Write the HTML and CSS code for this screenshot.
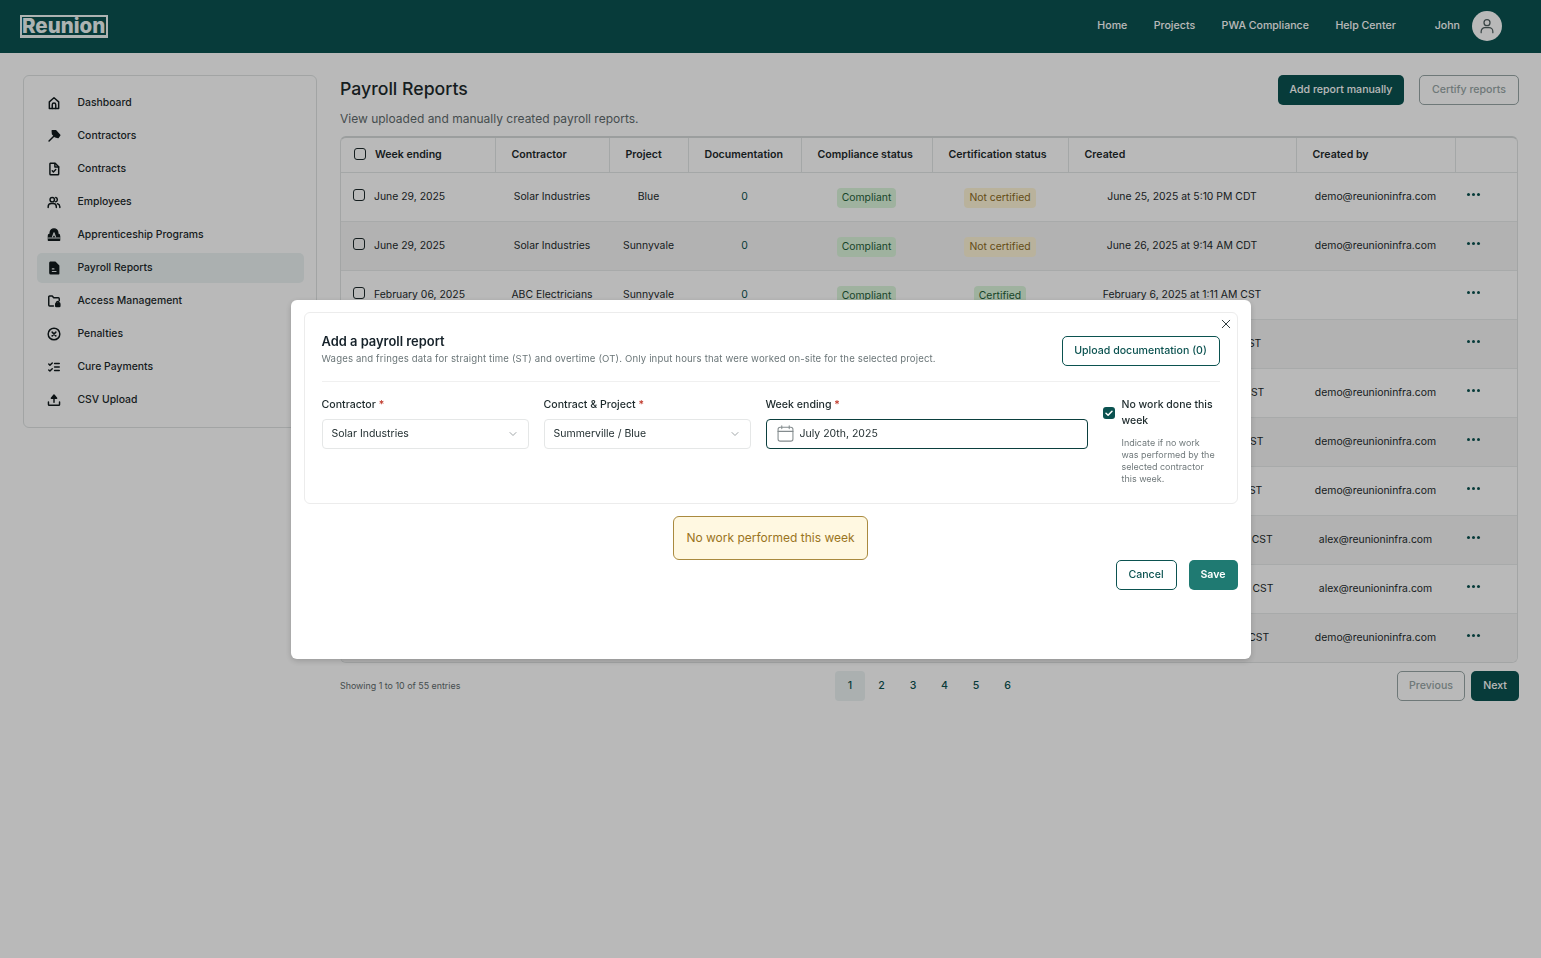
FILE: index.html
```html
<!DOCTYPE html>
<html lang="en">
<head>
<meta charset="utf-8">
<title>Payroll Reports</title>
<link rel="stylesheet" href="styles.css">
</head>
<body>
<header class="topbar">
  <div class="logo">Reunion</div>
  <nav class="topnav">
    <a>Home</a><a>Projects</a><a>PWA Compliance</a><a>Help Center</a>
  </nav>
  <div class="user">
    <span class="user-name">John</span>
    <span class="avatar"><svg viewBox="0 0 24 24" width="20" height="20" fill="none" stroke="#4f5f60" stroke-width="1.5" stroke-linecap="round"><circle cx="12" cy="8" r="3.6"/><path d="M5 20v-1.5A4.5 4.5 0 0 1 9.500 14h5a4.500 4.500 0 0 1 4.500 4.500V20"/></svg></span>
  </div>
</header>

<div class="page">
  <aside class="sidebar">
    <a class="side-item"><svg class="side-icon" viewBox="0 0 24 24"><path d="M4 21.500V10l8-7 8 7v11.500z"/><path d="M9 21.500V15a3 3 0 0 1 6 0v6.500"/></svg>Dashboard</a>
    <a class="side-item"><svg class="side-icon" viewBox="0 0 24 24"><path d="M3.500 20.500l9-9"/><path d="M9 3h6l7 7.500-3 4-4.500-1-5-5z" class="solid"/></svg>Contractors</a>
    <a class="side-item"><svg class="side-icon" viewBox="0 0 24 24"><path d="M6 2h8l6 6v12.500a1.500 1.500 0 0 1-1.500 1.500h-12A1.500 1.500 0 0 1 5 20.500V3.500A1.500 1.500 0 0 1 6 2z"/><path d="M13.500 2.500V8.500H20"/><path d="M9 15l2 2 4-4"/></svg>Contracts</a>
    <a class="side-item"><svg class="side-icon" viewBox="0 0 24 24"><circle cx="9" cy="8" r="3.800"/><path d="M2 21.500V20a5.500 5.500 0 0 1 5.500-5.500h3A5.500 5.500 0 0 1 16 20v1.500"/><path d="M15 4.300a3.800 3.800 0 0 1 0 7.300"/><path d="M18 15a5.500 5.500 0 0 1 4 5v1.500"/></svg>Employees</a>
    <a class="side-item"><svg class="side-icon" viewBox="0 0 24 24"><path class="solid" d="M2.500 21v-7.500a3 3 0 0 1 3-3V8a6.500 6.500 0 0 1 13 0v2.500a3 3 0 0 1 3 3V21z"/><path class="cut" d="M9.500 15l2.500-7 2.500 7M10.500 12.500h3M2.500 17h19"/></svg>Apprenticeship Programs</a>
    <a class="side-item side-active"><svg class="side-icon" viewBox="0 0 24 24"><path class="solid" d="M6 2h8l6 6v14H6.500A1.500 1.500 0 0 1 5 20.500V3.500A1.500 1.500 0 0 1 6 2z"/><path class="cut" d="M9 18h6.500M9 13.500h3"/></svg>Payroll Reports</a>
    <a class="side-item"><svg class="side-icon" viewBox="0 0 24 24"><path d="M11 20.500H4.500A1.500 1.500 0 0 1 3 19V5a1.500 1.500 0 0 1 1.500-1.500H9l2.500 3H19.500A1.500 1.500 0 0 1 21 8v3"/><rect class="solid" x="15" y="16" width="7" height="5.500" rx="1"/><path d="M16.500 16v-1a2 2 0 0 1 4 0v1"/></svg>Access Management</a>
    <a class="side-item"><svg class="side-icon" viewBox="0 0 24 24"><circle cx="12" cy="12" r="10"/><path d="M8.800 8.800l6.400 6.400M15.200 8.800l-6.400 6.400"/></svg>Penalties</a>
    <a class="side-item"><svg class="side-icon" viewBox="0 0 24 24"><path d="M3 7l2 2 4-4M3 17l2 2 4-4M13 6h8M13 12h8M13 18h8"/></svg>Cure Payments</a>
    <a class="side-item"><svg class="side-icon" viewBox="0 0 24 24"><path d="M12 16V5"/><path class="solid" d="M7.500 9L12 3.500 16.500 9z"/><path d="M2.500 15.500v4a1.500 1.500 0 0 0 1.500 1.500h16a1.500 1.500 0 0 0 1.500-1.500v-4"/></svg>CSV Upload</a>
  </aside>

  <main class="main">
    <div class="title-row">
      <div class="title-text">
        <h1 class="page-title">Payroll Reports</h1>
        <p class="page-sub">View uploaded and manually created payroll reports.</p>
      </div>
      <div class="title-actions">
        <button class="btn btn-dark btn-add">Add report manually</button>
        <button class="btn btn-muted btn-certify">Certify reports</button>
      </div>
    </div>

    <div class="table-wrap">
      <table class="reports">
        <colgroup>
          <col class="c1"><col class="c2"><col class="c3"><col class="c4"><col class="c5"><col class="c6"><col class="c7"><col class="c8"><col class="c9">
        </colgroup>
        <thead>
          <tr>
            <th class="th-week"><span class="check check-head"></span>Week ending</th>
            <th>Contractor</th><th>Project</th><th>Documentation</th><th>Compliance status</th><th>Certification status</th><th>Created</th><th>Created by</th><th></th>
          </tr>
        </thead>
        <tbody>
          <tr><td class="td-week"><span class="check"></span>June 29, 2025</td><td>Solar Industries</td><td>Blue</td><td class="zero">0</td><td><span class="badge good">Compliant</span></td><td><span class="badge warn">Not certified</span></td><td>June 25, 2025 at 5:10 PM CDT</td><td>demo@reunioninfra.com</td><td><span class="dots"><i></i><i></i><i></i></span></td></tr>
          <tr><td class="td-week"><span class="check"></span>June 29, 2025</td><td>Solar Industries</td><td>Sunnyvale</td><td class="zero">0</td><td><span class="badge good">Compliant</span></td><td><span class="badge warn">Not certified</span></td><td>June 26, 2025 at 9:14 AM CDT</td><td>demo@reunioninfra.com</td><td><span class="dots"><i></i><i></i><i></i></span></td></tr>
          <tr><td class="td-week"><span class="check"></span>February 06, 2025</td><td>ABC Electricians</td><td>Sunnyvale</td><td class="zero">0</td><td><span class="badge good">Compliant</span></td><td><span class="badge good">Certified</span></td><td>February 6, 2025 at 1:11 AM CST</td><td></td><td><span class="dots"><i></i><i></i><i></i></span></td></tr>
          <tr><td class="td-week"><span class="check"></span>February 06, 2025</td><td>ABC Electricians</td><td>Sunnyvale</td><td class="zero">0</td><td><span class="badge good">Compliant</span></td><td><span class="badge good">Certified</span></td><td>February 6, 2025 at 1:11 AM CST</td><td></td><td><span class="dots"><i></i><i></i><i></i></span></td></tr>
          <tr><td class="td-week"><span class="check"></span>January 26, 2025</td><td>Solar Industries</td><td>Blue</td><td class="zero">0</td><td><span class="badge good">Compliant</span></td><td><span class="badge warn">Not certified</span></td><td>January 28, 2025 at 1:22 PM CST</td><td>demo@reunioninfra.com</td><td><span class="dots"><i></i><i></i><i></i></span></td></tr>
          <tr><td class="td-week"><span class="check"></span>January 19, 2025</td><td>Solar Industries</td><td>Blue</td><td class="zero">0</td><td><span class="badge good">Compliant</span></td><td><span class="badge warn">Not certified</span></td><td>January 21, 2025 at 1:05 PM CST</td><td>demo@reunioninfra.com</td><td><span class="dots"><i></i><i></i><i></i></span></td></tr>
          <tr><td class="td-week"><span class="check"></span>January 12, 2025</td><td>Solar Industries</td><td>Blue</td><td class="zero">0</td><td><span class="badge good">Compliant</span></td><td><span class="badge warn">Not certified</span></td><td>January 14, 2025 at 1:18 PM CST</td><td>demo@reunioninfra.com</td><td><span class="dots"><i></i><i></i><i></i></span></td></tr>
          <tr><td class="td-week"><span class="check"></span>December 29, 2024</td><td>Solar Industries</td><td>Blue</td><td class="zero">0</td><td><span class="badge good">Compliant</span></td><td><span class="badge warn">Not certified</span></td><td>December 30, 2024 at 11:46 AM CST</td><td>alex@reunioninfra.com</td><td><span class="dots"><i></i><i></i><i></i></span></td></tr>
          <tr><td class="td-week"><span class="check"></span>December 22, 2024</td><td>Solar Industries</td><td>Blue</td><td class="zero">0</td><td><span class="badge good">Compliant</span></td><td><span class="badge warn">Not certified</span></td><td>December 23, 2024 at 10:52 AM CST</td><td>alex@reunioninfra.com</td><td><span class="dots"><i></i><i></i><i></i></span></td></tr>
          <tr><td class="td-week"><span class="check"></span>December 15, 2024</td><td>Solar Industries</td><td>Blue</td><td class="zero">0</td><td><span class="badge good">Compliant</span></td><td><span class="badge warn">Not certified</span></td><td>December 16, 2024 at 9:31 AM CST</td><td>demo@reunioninfra.com</td><td><span class="dots"><i></i><i></i><i></i></span></td></tr>
        </tbody>
      </table>
    </div>

    <div class="table-foot">
      <span class="entries">Showing 1 to 10 of 55 entries</span>
      <div class="pages">
        <span class="pg pg-on">1</span><span class="pg">2</span><span class="pg">3</span><span class="pg">4</span><span class="pg">5</span><span class="pg">6</span>
      </div>
      <div class="pager">
        <button class="btn btn-muted btn-prev">Previous</button>
        <button class="btn btn-dark btn-next">Next</button>
      </div>
    </div>
  </main>
</div>

<div class="overlay">
  <section class="modal">
    <div class="modal-card">
      <button class="close" aria-label="Close"><svg viewBox="0 0 12 12" width="10" height="10" fill="none" stroke="#1d2a2c" stroke-width="1.100" stroke-linecap="round"><path d="M1.500 1.500l9 9M10.500 1.500l-9 9"/></svg></button>
      <div class="modal-head">
        <div class="modal-head-text">
          <h2 class="modal-title">Add a payroll report</h2>
          <p class="modal-sub">Wages and fringes data for straight time (ST) and overtime (OT). Only input hours that were worked on-site for the selected project.</p>
        </div>
        <button class="btn btn-outline btn-upload">Upload documentation (0)</button>
      </div>
      <div class="form-row">
        <div class="field field-select">
          <label class="label">Contractor <b class="req">*</b></label>
          <div class="input"><span>Solar Industries</span><svg class="chev" viewBox="0 0 12 12"><path d="M3 4.500l3 3 3-3"/></svg></div>
        </div>
        <div class="field field-select">
          <label class="label">Contract &amp; Project <b class="req">*</b></label>
          <div class="input"><span>Summerville / Blue</span><svg class="chev" viewBox="0 0 12 12"><path d="M3 4.500l3 3 3-3"/></svg></div>
        </div>
        <div class="field field-date">
          <label class="label">Week ending <b class="req">*</b></label>
          <div class="input input-focus"><svg class="cal" viewBox="0 0 16 16"><rect x="1" y="2.200" width="14" height="13" rx="2"/><path d="M1 6h14M4.500 .8v2.600M11.500 .8v2.600"/></svg><span>July 20th, 2025</span></div>
        </div>
        <div class="nowork">
          <span class="tick"><svg viewBox="0 0 12 12" width="12" height="12" fill="none" stroke="#fff" stroke-width="1.500" stroke-linecap="round" stroke-linejoin="round"><path d="M3 6.300l2.100 2L9 4.200"/></svg></span>
          <div class="nowork-text">
            <div class="nowork-label">No work done this week</div>
            <p class="nowork-help">Indicate if no work was performed by the selected contractor this week.</p>
          </div>
        </div>
      </div>
    </div>
    <div class="modal-foot">
      <div class="notice">No work performed this week</div>
      <div class="modal-actions">
        <button class="btn btn-outline btn-cancel">Cancel</button>
        <button class="btn btn-save">Save</button>
      </div>
    </div>
  </section>
</div>
</body>
</html>
```
FILE: styles.css
```css
* { box-sizing: border-box; }
html, body { margin: 0; padding: 0; }
body {
  min-height: 958px;
  background: #fff;
  color: #1d2a2c;
  font-family: Inter, "Noto Sans", sans-serif;
  font-size: 10.400px;
  overflow: hidden;
}
p, h1, h2 { margin: 0; }
button { font-family: inherit; cursor: pointer; }

/* Header */
.topbar {
  height: 53px;
  background: #0b5250;
  display: flex;
  align-items: center;
  padding: 0 39px 1px 20px;
  color: #fff;
}
.logo {
  width: 88px;
  height: 23px;
  border: 2px solid #eff7f5;
  border-bottom-width: 3px;
  color: #eff7f5;
  font-size: 20.500px;
  font-weight: 800;
  line-height: 17px;
  white-space: nowrap;
}
.topnav {
  margin-left: auto;
  display: flex;
  gap: 26.500px;
  padding-bottom: 2px;
  font-size: 10.600px;
  font-weight: 500;
  color: #fff;
}
.user { display: flex; align-items: center; gap: 12px; margin-left: 39px; font-size: 10.600px; font-weight: 500; }
.user-name { padding-bottom: 2px; }
.avatar {
  width: 30px; height: 30px; border-radius: 50%;
  background: #fff;
  display: flex; align-items: center; justify-content: center;
}

/* Layout */
.page {
  display: flex;
  align-items: flex-start;
  gap: 23px;
  padding: 22px 22px 0 23px;
}

/* Sidebar */
.sidebar {
  width: 294px;
  flex: none;
  border: 1px solid #dfe3e3;
  border-radius: 6px;
  padding: 12px 12px 12px 13px;
  display: flex;
  flex-direction: column;
  gap: 3px;
}
.side-item {
  height: 30px;
  display: flex;
  align-items: center;
  gap: 16.500px;
  padding: 0 0 1px 10px;
  border-radius: 5px;
  font-weight: 500;
  color: #1d2a2c;
}
.side-active { background: #ecf3f3; }
.side-icon {
  width: 14px; height: 14px; flex: none;
  fill: none; stroke: #111a1c; stroke-width: 2.500;
  stroke-linecap: round; stroke-linejoin: round;
}
.side-icon .solid { fill: #111a1c; }
.side-icon .cut { stroke: #e8eeee; stroke-width: 1.800; }

/* Main */
.main { flex: 1; min-width: 0; }
.title-row { display: flex; justify-content: space-between; align-items: flex-start; height: 61px; }
.page-title { font-size: 17.700px; font-weight: 500; line-height: 28px; color: #1d2a2c; }
.page-sub { font-size: 12px; line-height: 20px; color: #5f6b6d; margin-top: 6px; }
.title-actions { display: flex; gap: 15px; }

.btn {
  height: 30px;
  border-radius: 5px;
  font-size: 10.600px;
  font-weight: 500;
  border: 1px solid transparent;
  padding: 0;
}
.btn-dark { background: #0b5250; color: #fff; }
.btn-muted { background: transparent; border-color: #98a6a6; color: #98a6a6; }
.btn-outline { background: #fff; border-color: #0b5250; color: #0b5250; }
.btn-add, .btn-certify, .btn-upload, .btn-prev, .btn-next { padding-bottom: 1px; }
.btn-add { width: 126px; }
.btn-certify { width: 100px; }

/* Table */
.table-wrap {
  width: 1178px;
  border: 1px solid #e1e4e4;
  border-top: 2px solid #d6dada;
  border-radius: 6px;
  overflow: hidden;
}
.reports { width: 1176px; border-collapse: collapse; table-layout: fixed; }
.c1 { width: 154px; } .c2 { width: 114px; } .c3 { width: 79px; }
.c4 { width: 113px; } .c5 { width: 131px; } .c6 { width: 136px; }
.c7 { width: 228px; } .c8 { width: 159px; } .c9 { width: 62px; }
.reports th {
  height: 34px;
  text-align: left;
  padding: 0 0 0 16px;
  font-size: 10.600px;
  font-weight: 600;
  color: #1d2a2c;
  border-right: 1px solid #e3e6e6;
  border-bottom: 1px solid #e3e6e6;
  white-space: nowrap;
}
.reports th:last-child { border-right: 0; }
.reports .th-week { padding-left: 13px; }
.check {
  display: inline-block;
  width: 12px; height: 12px;
  border: 1.400px solid #1d2a2c;
  border-radius: 3px;
  flex: none;
}
.check-head { vertical-align: -2px; margin-right: 9px; }
.reports td {
  height: 49px;
  padding: 0;
  text-align: center;
  border-bottom: 1px solid #e8ebeb;
  color: #1d2a2c;
  white-space: nowrap;
}
.reports tbody tr:nth-child(even) { background: #f6f6f6; }
.reports tbody tr:last-child td { border-bottom: 0; }
.reports .td-week { text-align: left; padding: 0 0 2px 12px; }
.td-week .check { vertical-align: -1px; margin-right: 9px; }
.reports .zero { color: #0b5250; }
.badge {
  display: inline-block;
  height: 20px;
  line-height: 20px;
  padding: 0 5px;
  border-radius: 4px;
  position: relative;
  top: 1px;
}
.good { background: #dcf5dc; color: #1f5f38; }
.warn { background: #fff6d8; color: #8a6a1e; }
.dots { display: inline-flex; gap: 2px; position: relative; left: -13px; top: -4px; }
.dots i { width: 3px; height: 3px; border-radius: 50%; background: #0b5250; display: block; }

/* Footer */
.table-foot {
  display: grid;
  grid-template-columns: 495px 1fr auto;
  align-items: center;
  margin-top: 8px;
  height: 30px;
}
.entries { font-size: 8.900px; color: #5f6b6d; padding-bottom: 2px; }
.pages { display: flex; gap: 1.500px; }
.pg {
  width: 30px; height: 30px; border-radius: 4px;
  display: flex; align-items: center; justify-content: center;
  padding-bottom: 1px;
  color: #0b5250; font-size: 10.600px; font-weight: 500;
}
.pg-on { background: #ecf3f3; }
.pager { display: flex; gap: 6px; }
.btn-prev { width: 68px; }
.btn-next { width: 48px; }

/* Modal */
.overlay {
  position: fixed;
  inset: 0;
  background: rgba(0, 0, 0, .275);
  display: flex;
  align-items: center;
  justify-content: center;
}
.modal {
  width: 960px;
  height: 359px;
  background: #fff;
  border-radius: 6px;
  padding: 12px 13px;
  box-shadow: 0 2px 6px rgba(0, 0, 0, .18);
}
.modal-card {
  position: relative;
  height: 192px;
  border: 1px solid #ececec;
  border-radius: 6px;
  padding: 0 17px;
}
.close {
  position: absolute;
  top: 5px; right: 5px;
  width: 12px; height: 12px;
  border: 0; padding: 0; background: none;
  display: flex; align-items: center; justify-content: center;
}
.modal-head {
  display: flex;
  justify-content: space-between;
  align-items: center;
  height: 69px;
  padding-top: 9px;
  border-bottom: 1px solid #f0f0f0;
}
.modal-head-text { padding-bottom: 4px; }
.modal-title { font-size: 12.900px; font-weight: 600; line-height: 18px; color: #16222a; }
.modal-sub { font-size: 9.600px; line-height: 13px; color: #6b7678; letter-spacing: .14px; margin-top: 1.500px; }
.btn-upload { width: 158px; }
.form-row { display: flex; gap: 15px; padding-top: 15px; }
.field { display: flex; flex-direction: column; gap: 7px; }
.field-select { width: 207px; }
.field-date { width: 322px; }
.label { font-size: 10.600px; line-height: 15px; font-weight: 500; color: #1d2a2c; }
.req { color: #c0392b; font-weight: 500; }
.input {
  height: 30px;
  border: 1px solid #e5e7e7;
  border-radius: 4px;
  display: flex;
  align-items: center;
  justify-content: space-between;
  padding: 0 9px;
  font-size: 10.500px;
  color: #1d2a2c;
}
.input-focus { border-color: #0b3f3e; justify-content: flex-start; gap: 6px; padding-left: 10px; }
.chev { width: 12px; height: 12px; fill: none; stroke: #a0a6a8; stroke-width: 1; stroke-linecap: round; stroke-linejoin: round; }
.cal { width: 17px; height: 17px; fill: none; stroke: #848c8e; stroke-width: 1; stroke-linecap: round; }
.nowork { display: flex; gap: 7px; width: 117px; }
.tick {
  width: 12px; height: 12px; margin-top: 10px; flex: none;
  background: #0b5250; border-radius: 3px;
}
.nowork-label { font-size: 10.500px; line-height: 16px; font-weight: 500; color: #1d2a2c; }
.nowork-help { font-size: 8.960px; line-height: 12px; color: #70797b; margin-top: 8px; max-width: 96px; }

.modal-foot { position: relative; display: flex; justify-content: center; padding-top: 12px; }
.notice {
  width: 195px; height: 44px;
  background: #fff8e1;
  border: 1px solid #a98a3f;
  border-radius: 6px;
  display: flex; align-items: center; justify-content: center;
  color: #9a7421;
  font-size: 12px;
}
.modal-actions { position: absolute; right: 0; top: 56px; display: flex; gap: 12px; }
.btn-cancel { width: 61px; }
.btn-save { width: 49px; background: #1f7a72; color: #fff; font-weight: 600; }
```
